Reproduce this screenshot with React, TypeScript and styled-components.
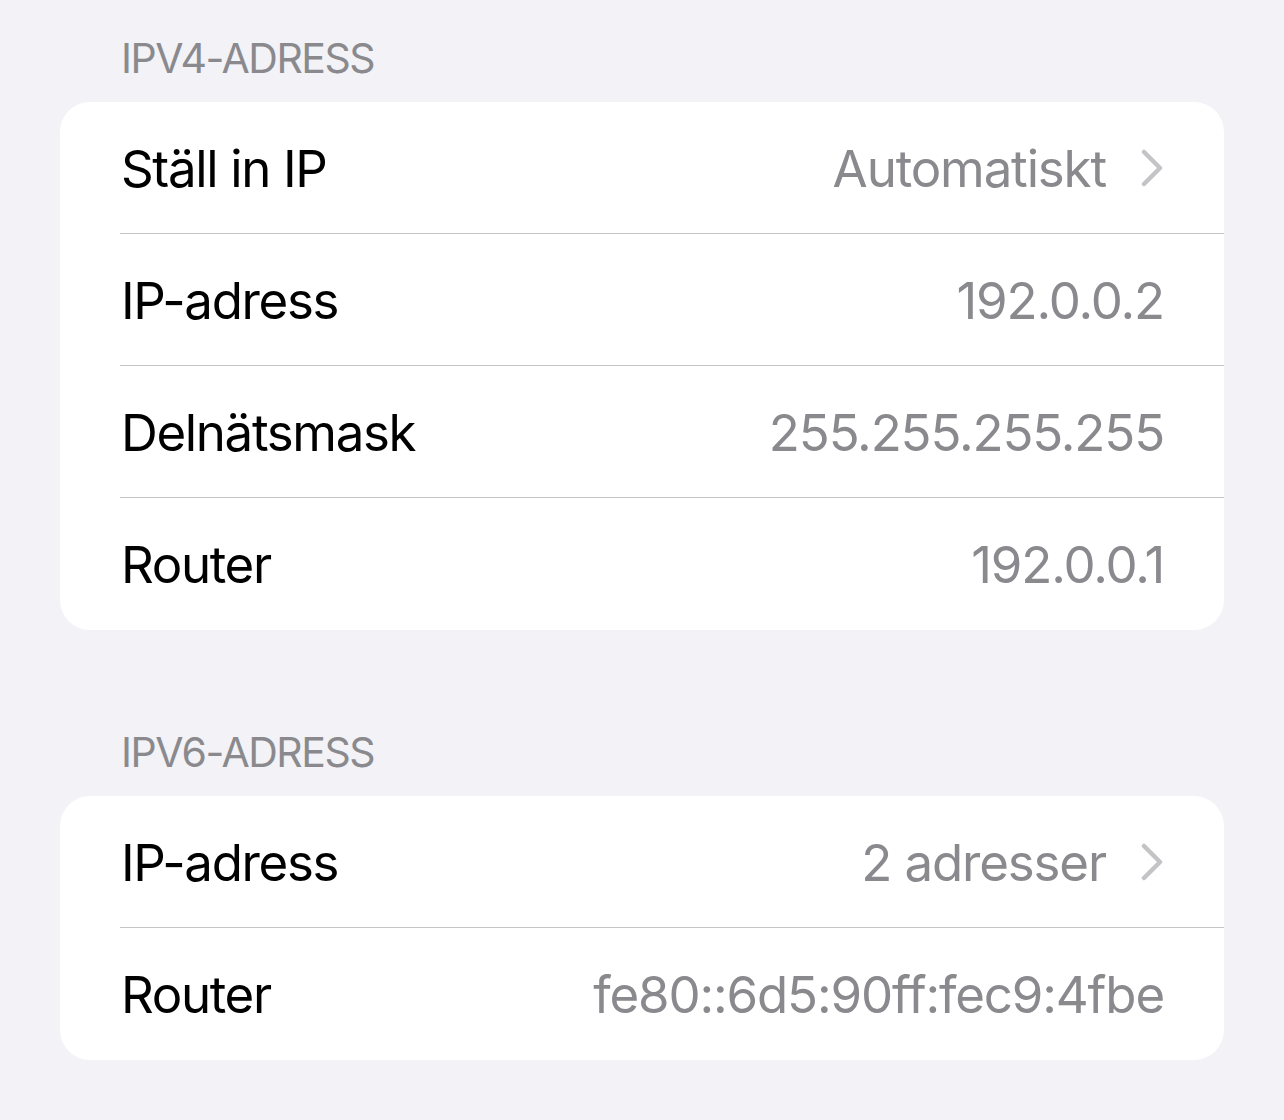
import React from "react";
import styled, { createGlobalStyle } from "styled-components";

const Global = createGlobalStyle`
  html, body { margin: 0; padding: 0; background: #f2f2f7; }
  body { font-family: Inter, "Noto Sans", sans-serif; -webkit-font-smoothing: antialiased; }
`;

const Page = styled.div`
  padding: 38px 60px 40px 60px;
  display: flex;
  flex-direction: column;
`;

const Section = styled.section`
  display: flex;
  flex-direction: column;
  & + & { margin-top: 102px; }
`;

const Header = styled.div`
  font-size: 41px;
  line-height: 41px;
  color: #8a8a8e;
  padding-left: 61px;
  margin-bottom: 23px;
  letter-spacing: -1.5px;
`;

const Card = styled.div`
  background: #ffffff;
  border-radius: 30px;
  overflow: hidden;
  display: flex;
  flex-direction: column;
`;

const Row = styled.div`
  height: 132px;
  display: flex;
  align-items: center;
  padding-left: 61px;
  position: relative;
  & + &::before {
    content: "";
    position: absolute;
    top: -1px;
    left: 60px;
    right: 0;
    height: 1px;
    background: #c6c6c8;
  }
`;

const Content = styled.div`
  flex: 1;
  display: flex;
  align-items: center;
  justify-content: space-between;
  padding-right: 60px;
`;

const Label = styled.span`
  font-size: 51px;
  color: #000;
  letter-spacing: -1.35px;
`;

const Value = styled.span`
  font-size: 51px;
  color: #8a8a8e;
  letter-spacing: -1.15px;
  display: flex;
  align-items: center;
`;

const Chevron = styled.svg`
  margin-left: 34px;
  width: 24px;
  height: 38px;
  flex: none;
`;

const ChevronIcon = () => (
  <Chevron viewBox="0 0 24 38">
    <path
      d="M4 3 L20 19 L4 35"
      fill="none"
      stroke="#c4c4c7"
      strokeWidth="4.5"
      strokeLinecap="round"
      strokeLinejoin="round"
    />
  </Chevron>
);

type Item = { label: string; value: string; chevron?: boolean };

const ipv4: Item[] = [
  { label: "Ställ in IP", value: "Automatiskt", chevron: true },
  { label: "IP-adress", value: "192.0.0.2" },
  { label: "Delnätsmask", value: "255.255.255.255" },
  { label: "Router", value: "192.0.0.1" },
];

const ipv6: Item[] = [
  { label: "IP-adress", value: "2 adresser", chevron: true },
  { label: "Router", value: "fe80::6d5:90ff:fec9:4fbe" },
];

const Group = ({ title, items }: { title: string; items: Item[] }) => (
  <Section>
    <Header>{title}</Header>
    <Card>
      {items.map((it, i) => (
        <Row key={i}>
          <Content>
            <Label>{it.label}</Label>
            <Value>
              {it.value}
              {it.chevron && <ChevronIcon />}
            </Value>
          </Content>
        </Row>
      ))}
    </Card>
  </Section>
);

export default function App() {
  return (
    <>
      <Global />
      <Page>
        <Group title="IPV4-ADRESS" items={ipv4} />
        <Group title="IPV6-ADRESS" items={ipv6} />
      </Page>
    </>
  );
}
